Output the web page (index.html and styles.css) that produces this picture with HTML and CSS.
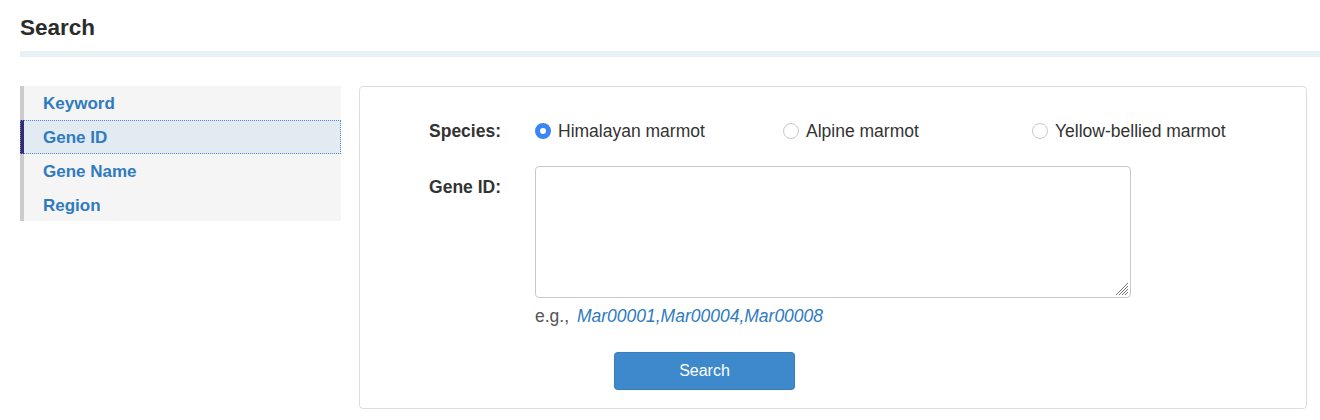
FILE: index.html
```html
<!DOCTYPE html>
<html>
<head>
<meta charset="utf-8">
<link rel="stylesheet" href="styles.css">
</head>
<body>
<div class="page">
  <h1 class="title">Search</h1>
  <div class="divider"></div>
  <div class="content">
    <ul class="side-nav">
      <li class="nav-item"><a>Keyword</a></li>
      <li class="nav-item active"><a>Gene ID</a></li>
      <li class="nav-item"><a>Gene Name</a></li>
      <li class="nav-item"><a>Region</a></li>
    </ul>
    <div class="panel">
      <div class="form-row species-row">
        <div class="label">Species:</div>
        <div class="radios">
          <label class="radio"><span class="dot checked"></span>Himalayan marmot</label>
          <label class="radio"><span class="dot"></span>Alpine marmot</label>
          <label class="radio"><span class="dot"></span>Yellow-bellied marmot</label>
        </div>
      </div>
      <div class="form-row gene-row">
        <div class="label gene-label">Gene ID:</div>
        <div class="field">
          <div class="textarea"><svg class="grip" width="14" height="14" viewBox="0 0 14 14"><path d="M13 4 L4 13 M13 7 L7 13 M13 10 L10 13 M13 1 L1 13" stroke="#777" stroke-width="1" fill="none"/></svg></div>
          <div class="example">e.g., <a class="ex-link">Mar00001,Mar00004,Mar00008</a></div>
        </div>
      </div>
      <div class="btn-row">
        <button class="btn">Search</button>
      </div>
    </div>
  </div>
</div>
</body>
</html>
```

FILE: styles.css
```css
html, body {
  margin: 0;
  padding: 0;
  background: #fff;
}
body {
  font-family: "Liberation Sans", Arial, Helvetica, sans-serif;
  color: #333;
}
.page {
  padding: 0 0 0 20px;
}
.title {
  margin: 0;
  padding-top: 15px;
  height: 51px;
  box-sizing: border-box;
  font-size: 22.5px;
  line-height: 26px;
  font-weight: bold;
  color: #2b2b2b;
}
.divider {
  height: 6px;
  background: #e8f1f3;
}
.content {
  display: flex;
  align-items: flex-start;
  margin-top: 29px;
}
.side-nav {
  list-style: none;
  margin: 0;
  padding: 0;
  width: 321px;
  background: #f5f5f5;
  flex: none;
}
.nav-item {
  height: 34px;
  border-left: 4px solid #cccccc;
  box-sizing: border-box;
  display: flex;
  align-items: center;
  padding-left: 19px;
  padding-top: 2px;
  font-size: 17px;
  font-weight: bold;
  color: #2f7bbf;
}
.nav-item:last-child {
  height: 33px;
}
.nav-item.active {
  border-left-color: #3b2a6e;
  background: #e2eaf2;
  outline: 1px dotted #4a8ad0;
  outline-offset: -1px;
}
.panel {
  margin-left: 18px;
  width: 948px;
  height: 323px;
  box-sizing: border-box;
  border: 1px solid #dddddd;
  border-radius: 4px;
  padding-top: 33px;
}
.form-row {
  display: flex;
}
.label {
  width: 141px;
  text-align: right;
  font-weight: bold;
  font-size: 17.5px;
  line-height: 22px;
  color: #333;
  flex: none;
}
.species-row {
  height: 22px;
  align-items: center;
}
.radios {
  margin-left: 34px;
  display: grid;
  grid-template-columns: 248px 249px 249px;
}
.radio {
  display: flex;
  align-items: center;
  font-size: 17.5px;
  line-height: 22px;
  color: #333;
}
.dot {
  width: 16px;
  height: 16px;
  border-radius: 50%;
  border: 1px solid #c8c8c8;
  background: #fff;
  margin-right: 7px;
  box-sizing: border-box;
  flex: none;
}
.dot.checked {
  border: 5px solid #3b86f5;
  background: #fff;
}
.gene-row {
  margin-top: 24px;
}
.gene-label {
  padding-top: 10px;
}
.field {
  margin-left: 34px;
}
.textarea {
  position: relative;
  width: 596px;
  height: 132px;
  box-sizing: border-box;
  border: 1px solid #c9c9c9;
  border-radius: 4px;
  background: #fff;
}
.grip {
  position: absolute;
  right: 1px;
  bottom: 1px;
}
.example {
  margin-top: 7px;
  font-size: 17.5px;
  line-height: 22px;
  color: #555;
}
.ex-link {
  margin-left: 3px;
  font-style: italic;
  color: #2f7bbf;
}
.btn-row {
  margin-top: 25px;
  padding-left: 254px;
}
.btn {
  width: 181px;
  height: 38px;
  background: #3d89cc;
  border: 1px solid #3a7fbd;
  border-radius: 4px;
  color: #fff;
  font-family: "Liberation Sans", Arial, sans-serif;
  font-size: 16px;
  box-shadow: 0 0 1px rgba(0,0,0,0.3);
}
```
